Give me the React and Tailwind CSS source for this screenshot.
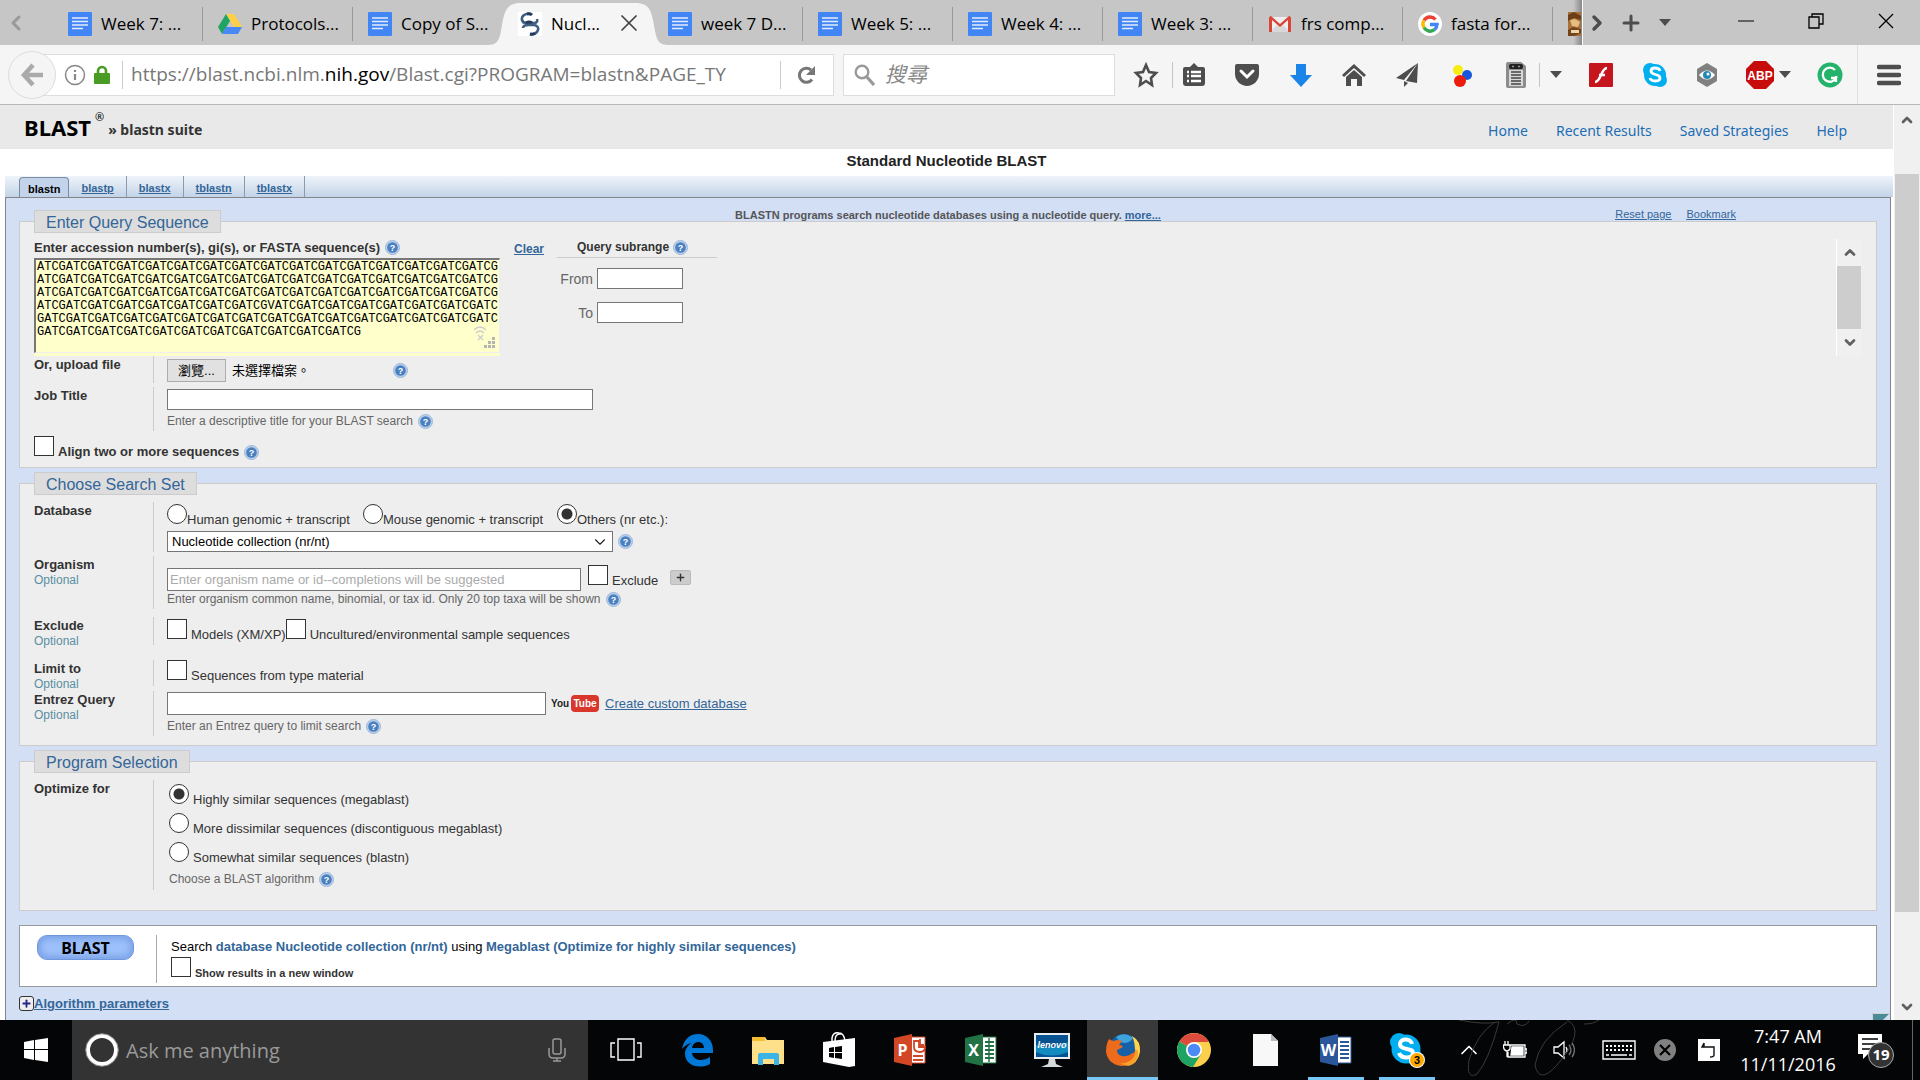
import { useRef, useState } from "react";
import { ChevronDown, ChevronLeft, ChevronRight, ChevronUp, Plus, X } from "lucide-react";

const browserTabs = [
  { title: "Week 7: ...", icon: "doc" },
  { title: "Protocols...", icon: "drive" },
  { title: "Copy of S...", icon: "doc" },
  { title: "Nucl...", icon: "blast", active: true },
  { title: "week 7 D...", icon: "doc" },
  { title: "Week 5: ...", icon: "doc" },
  { title: "Week 4: ...", icon: "doc" },
  { title: "Week 3: ...", icon: "doc" },
  { title: "frs comp...", icon: "gmail" },
  { title: "fasta for...", icon: "google" },
];

const programs = ["blastn", "blastp", "blastx", "tblastn", "tblastx"];

const sequence = [
  "ATCG".repeat(16),
  "ATCG".repeat(16),
  "ATCG".repeat(16),
  "ATCG".repeat(8) + "V" + "ATCG".repeat(7) + "ATC",
  "G" + "ATCG".repeat(15) + "ATC",
  "G" + "ATCG".repeat(11),
].join("\n");

function TabIcon({ name }) {
  if (name === "drive") {
    return (
      <svg className="size-6 shrink-0" viewBox="0 0 24 24">
        <path d="M8 2h8l8 13h-8z" fill="#ffcf48" />
        <path d="M8 2l4 7-8 13-4-7z" fill="#1fa463" />
        <path d="M8 15h16l-4 7H4z" fill="#4688f4" />
      </svg>
    );
  }
  if (name === "blast") {
    return (
      <svg className="size-6 shrink-0 bg-white" viewBox="0 0 24 24" fill="none" strokeWidth="2.6">
        <path d="M13 2C7 1 3 4 4 8q1 3 4 3h8q4 0 3-4" stroke="#3f5f82" />
        <path d="M9 2q3-1 5 1" stroke="#22395a" strokeWidth="3" />
        <path d="M8 11q3-2 6 0" stroke="#22395a" strokeWidth="3" />
        <path d="M5 16q0-3 5-3h6q5 1 4 5-2 5-8 4" stroke="#3f5f82" />
        <path d="M12 22q3 1 5-1" stroke="#22395a" strokeWidth="3" />
      </svg>
    );
  }
  if (name === "gmail") {
    return (
      <svg className="size-6 shrink-0" viewBox="0 0 24 24">
        <path d="M2 5h20v15H2z" fill="#eee" />
        <path d="M2 20l8-8 2 2 2-2 8 8z" fill="#d8d8d8" />
        <path d="M1 6c0-1 1-2 2-2l9 8 9-8c1 0 2 1 2 2v13c0 1-1 1-1 1h-2V8l-8 7-8-7v12H2s-1 0-1-1z" fill="#db4437" />
      </svg>
    );
  }
  if (name === "google") {
    return (
      <svg className="size-6 shrink-0" viewBox="0 0 24 24" fill="none" strokeWidth="3.4">
        <circle cx="12" cy="12" r="12" fill="#fff" />
        <path d="M17.5 7.5A7.2 7.2 0 0 0 6 8.3" stroke="#ea4335" />
        <path d="M6 8.3a7.2 7.2 0 0 0 0 7.4" stroke="#fbbc05" />
        <path d="M6 15.7a7.2 7.2 0 0 0 10.5 2" stroke="#34a853" />
        <path d="M16.5 17.7A7.2 7.2 0 0 0 19 12.5h-7" stroke="#4285f4" />
      </svg>
    );
  }
  return (
    <svg className="size-6 shrink-0" viewBox="0 0 24 24">
      <rect width="24" height="24" rx="1" fill="#4285f4" />
      <path d="M4 6h16M4 9.5h16M4 13h16M4 16.5h11" stroke="#e3edfd" strokeWidth="1.6" />
    </svg>
  );
}

function BrowserTab({ tab }) {
  if (tab.active) {
    return (
      <div className="relative flex h-full w-[150px] shrink-0 items-center">
        <svg className="absolute -left-4 bottom-0 h-[42px] w-[182px]" viewBox="0 0 182 42">
          <path d="M0 42C10 42 12 38 14 28 17 10 18 0 34 0H148c16 0 17 10 20 28 2 10 4 14 14 14z" fill="#f5f5f5" />
        </svg>
        <button className="relative flex w-[112px] items-center gap-[9px] pt-[2px] pl-[15px] text-left">
          <TabIcon name={tab.icon} />
          <span>{tab.title}</span>
        </button>
        <button aria-label="Close tab" className="relative">
          <X className="size-7" strokeWidth={1.5} color="#444" />
        </button>
      </div>
    );
  }
  return (
    <button className="relative flex h-full w-[150px] shrink-0 items-center gap-[9px] pt-[2px] pl-[15px] text-left">
      <TabIcon name={tab.icon} />
      <span className="whitespace-nowrap">{tab.title}</span>
      {tab.title !== "Copy of S..." && <span className="absolute top-[7px] right-0 h-[34px] w-px bg-[#999]" />}
    </button>
  );
}

function TabBar() {
  return (
    <div className="flex h-[45px] shrink-0 items-center bg-[#c6c6c6] text-[17px] text-black">
      <button aria-label="Scroll tabs left" className="flex w-[53px] pl-1">
        <ChevronLeft className="size-6" strokeWidth={3} color="#999" />
      </button>
      {browserTabs.map((t, i) => <BrowserTab key={i} tab={t} />)}
      <div className="flex h-full w-[30px] shrink-0 items-center border-r border-white bg-linear-to-r from-[#c6c6c6] from-70% to-[#888] pt-[2px] pl-[15px]">
        <svg className="h-6 w-[13px]" viewBox="0 0 13 24">
          <rect width="13" height="24" fill="#a8703a" />
          <path d="M0 3l6-3 7 4v4L6 6 0 9z" fill="#6e3f17" />
          <path d="M2 8l5-1 5 3-2 5-6-1z" fill="#e5bd80" />
          <path d="M0 18l5-3 8 2v4l-7 3H0z" fill="#74431c" />
          <path d="M3 18h8v3H3z" fill="#efd6a8" />
        </svg>
      </div>
      <button aria-label="Scroll tabs right" className="ml-[2px]"><ChevronRight className="size-6" strokeWidth={3.5} color="#4d4d4d" /></button>
      <button aria-label="New tab" className="ml-[10px]"><Plus className="size-6" strokeWidth={3} color="#4d4d4d" /></button>
      <button aria-label="List tabs" className="ml-4">
        <svg className="h-[7px] w-3" viewBox="0 0 12 7"><path d="M0 0h12L6 7z" fill="#4d4d4d" /></svg>
      </button>
      <div className="ml-auto flex items-center gap-[54px] pr-[26px] pb-1">
        <button aria-label="Minimize">
          <svg className="size-4" viewBox="0 0 16 16"><path d="M0 8h16" stroke="#000" /></svg>
        </button>
        <button aria-label="Restore">
          <svg className="size-4" viewBox="0 0 16 16" fill="none" stroke="#000" strokeWidth="1.3">
            <path d="M1 4h10v11H1zM4 4V1h11v10h-4" />
          </svg>
        </button>
        <button aria-label="Close window">
          <svg className="size-4" viewBox="0 0 16 16"><path d="M1 1l14 14M15 1L1 15" stroke="#000" strokeWidth="1.3" /></svg>
        </button>
      </div>
    </div>
  );
}

function Tool({ label, width, children }) {
  return (
    <button aria-label={label} className={"flex shrink-0 items-center justify-center " + (width || "w-[53px]")}>
      <svg className="size-[26px]" viewBox="0 0 26 26">{children}</svg>
    </button>
  );
}

function Caret() {
  return <svg className="h-[7px] w-3 shrink-0" viewBox="0 0 12 7"><path d="M0 0h12L6 7z" fill="#4d4d4d" /></svg>;
}

function NavBar() {
  return (
    <div className="flex h-[60px] shrink-0 items-center border-b border-[#b8b8b8] bg-[#f5f5f5] pl-2">
      <button aria-label="Back" className="relative z-10 -mr-[14px] flex size-12 shrink-0 items-center justify-center rounded-full border border-[#ddd] bg-[#f5f5f5]">
        <svg className="size-6" viewBox="0 0 24 24" fill="none" stroke="#aaa" strokeWidth="4.5">
          <path d="M13 2L4 12l9 10M4 12h19" />
        </svg>
      </button>
      <div className="flex h-[42px] min-w-0 flex-1 items-center border border-[#ddd] bg-white pl-[21px]">
        <svg className="size-[22px] shrink-0" viewBox="0 0 22 22" fill="none" stroke="#888" strokeWidth="1.5">
          <circle cx="11" cy="11" r="9.5" />
          <path d="M11 10v6M11 6v2" strokeWidth="2.2" />
        </svg>
        <svg className="ml-2 h-[19px] w-4 shrink-0" viewBox="0 0 16 19">
          <path d="M4 9V6a4 4 0 0 1 8 0v3" fill="none" stroke="#4a9b24" strokeWidth="2.6" />
          <rect y="8" width="16" height="11" rx="1" fill="#4a9b24" />
        </svg>
        <div className="ml-3 h-7 w-px shrink-0 bg-[#ccc]" />
        <div className="ml-2 text-[19px] whitespace-nowrap text-[#777]">
          https://blast.ncbi.nlm.<span className="text-black">nih.gov</span>/Blast.cgi?PROGRAM=blastn&amp;PAGE_TY
        </div>
        <div className="ml-auto h-7 w-px shrink-0 bg-[#ccc]" />
        <button aria-label="Reload" className="px-4">
          <svg className="size-5" viewBox="0 0 20 20">
            <path d="M15 14.5A7 7 0 1 1 14 5" fill="none" stroke="#777" strokeWidth="3" />
            <path d="M18 1v9H9z" fill="#777" />
          </svg>
        </button>
      </div>
      <div className="ml-[9px] flex h-[42px] w-[272px] shrink-0 items-center gap-[9px] border border-[#ddd] bg-white pl-[10px]">
        <svg className="size-[22px] shrink-0" viewBox="0 0 22 22" fill="none" stroke="#999">
          <circle cx="8" cy="8" r="6.3" strokeWidth="2.4" />
          <path d="M12.5 12.5L20 21" strokeWidth="3.2" />
        </svg>
        <input aria-label="搜尋" placeholder="搜尋" className="min-w-0 flex-1 text-[21px] italic outline-none placeholder:text-[#888]" />
      </div>
      <div className="ml-1 flex w-[801px] shrink-0 items-center">
        <Tool label="Bookmark page">
          <path d="M13 3l3 7 7 1-5 5 1 7-6-4-6 4 1-7-5-5 7-1z" fill="none" stroke="#4d4d4d" strokeWidth="2.6" />
        </Tool>
        <Tool label="Bookmarks" width="w-[43px] border-l border-[#c4c4c4]">
          <path d="M4 5h5l4-4 4 4h5q2 0 2 2v14q0 3-3 3H5q-3 0-3-3V7q0-2 2-2z" fill="#4d4d4d" />
          <path d="M6 10h2M10 10h10M6 14h2M10 14h10M6 19h2M10 19h10" stroke="#fff" strokeWidth="2.4" />
        </Tool>
        <Tool label="Pocket" width="w-[64px]">
          <path d="M3 2h20q2 0 2 2v8c0 7-6 12-12 12S1 19 1 12V4q0-2 2-2z" fill="#4d4d4d" />
          <path d="M7 9l6 6 6-6" fill="none" stroke="#fff" strokeWidth="3" strokeLinecap="round" />
        </Tool>
        <Tool label="Downloads" width="w-[43px]">
          <path d="M8 2h10v11h6L13 25 2 13h6z" fill="#1a84e8" />
        </Tool>
        <Tool label="Home" width="w-[64px]">
          <path d="M1 13L13 2l12 11-2 2L13 6 3 15z" fill="#4d4d4d" />
          <path d="M5 15l8-7 8 7v9h-5v-7h-6v7H5z" fill="#4d4d4d" />
        </Tool>
        <Tool label="Share" width="w-[41px]">
          <path d="M24 1L2 16l8 2zM24 1L12 19l11 2zM10 19v6l4-4z" fill="#4d4d4d" />
        </Tool>
        <Tool label="Color tool" width="w-[69px]">
          <circle cx="9" cy="8" r="5" fill="#f5ee10" />
          <circle cx="18" cy="13" r="5" fill="#1757e0" />
          <circle cx="11" cy="19" r="6" fill="#ee1c0c" />
        </Tool>
        <Tool label="Session manager" width="w-[39px]">
          <path d="M5 0h13l5 4v20q0 2-2 2H5q-2 0-2-2V2q0-2 2-2z" fill="#8c8c8c" />
          <rect x="6" y="2" width="14" height="5" rx="2" fill="#222" />
          <path d="M9 4.500h2M15 4.500h2" stroke="#999" strokeWidth="1.500" />
          <path d="M6 8h14v16H6z" fill="#d8d8d8" />
          <path d="M8 10h10M8 13h10M8 16h10M8 19h10M8 22h10" stroke="#444" strokeWidth="1.500" />
        </Tool>
        <button aria-label="More sessions" className="ml-1 flex h-6 w-8 items-center justify-center border-l border-[#c4c4c4]"><Caret /></button>
        <Tool label="Flash" width="w-[60px]">
          <rect x="1" y="1" width="24" height="24" rx="1" fill="#c4161c" />
          <path d="M19 6c-6 0-6 14-12 14M11 13h6" fill="none" stroke="#fff" strokeWidth="2.6" />
        </Tool>
        <Tool label="Skype" width="w-[48px]">
          <circle cx="8" cy="8" r="7" fill="#00aff0" />
          <circle cx="18" cy="18" r="7" fill="#00aff0" />
          <circle cx="13" cy="13" r="11" fill="#00aff0" />
          <path d="M18 9c-1-4-9-4-9 0 0 5 9 2 9 7 0 4-9 4-10 0" fill="none" stroke="#fff" strokeWidth="2.8" />
        </Tool>
        <Tool label="Privacy" width="w-[55px]">
          <path d="M13 1l10 6v12l-10 6-10-6V7z" fill="#808080" />
          <path d="M5 13q8-9 16 0-8 9-16 0z" fill="#fff" />
          <circle cx="13" cy="13" r="4" fill="#2288b5" />
          <circle cx="14" cy="12" r="1.5" fill="#fff" />
        </Tool>
        <button aria-label="Adblock Plus" className="flex w-[68px] items-center gap-[5px] pl-3">
          <svg className="size-7" viewBox="0 0 28 28">
            <path d="M8 0h12l8 8v12l-8 8H8l-8-8V8z" fill="#c70d0c" />
            <text x="14" y="19" textAnchor="middle" fontSize="12" fontWeight="bold" fill="#fff" fontFamily="Liberation Sans">ABP</text>
          </svg>
          <Caret />
        </button>
        <Tool label="Grammarly" width="w-[55px]">
          <circle cx="13" cy="13" r="12.5" fill="#25b36b" />
          <path d="M18 8a7 7 0 1 0 1 8h-5M19 14v6" fill="none" stroke="#fff" strokeWidth="2.3" />
        </Tool>
        <button aria-label="Menu" className="flex h-[59px] flex-1 items-center justify-center border-l border-[#e0e0e0]">
          <svg className="h-[22px] w-6" viewBox="0 0 24 22">
            <path d="M2 3h20M2 11h20M2 19h20" stroke="#4d4d4d" strokeWidth="4.5" strokeLinecap="round" />
          </svg>
        </button>
      </div>
    </div>
  );
}

function Help() {
  return (
    <button type="button" aria-label="Help" className="shrink-0">
      <svg className="size-[15px]" viewBox="0 0 15 15">
        <circle cx="7.5" cy="7.5" r="7" fill="#b9d0ec" stroke="#9db8d8" />
        <circle cx="7.5" cy="7.5" r="5.3" fill="#4a80c0" />
        <text x="7.5" y="11" textAnchor="middle" fontSize="9" fontWeight="bold" fill="#fff" fontFamily="Liberation Sans">?</text>
      </svg>
    </button>
  );
}

function Fieldset({ title, className, children }) {
  return (
    <fieldset className={"min-w-0 border border-[#ccc] bg-[#eee] " + className}>
      <legend className="ml-[14px] h-[23px] border border-[#ccc] bg-[#ddd] px-[11px] text-base leading-6 text-[#369]">{title}</legend>
      <div className="px-[14px]">{children}</div>
    </fieldset>
  );
}

function Row({ label, htmlFor, optional, className, children }) {
  return (
    <div className={"flex " + className}>
      <div className="w-[119px] shrink-0 pt-px leading-4">
        <label htmlFor={htmlFor} className="block font-bold">{label}</label>
        {optional && <span className="block text-xs leading-[15px] text-[#5a8fa3]">Optional</span>}
      </div>
      <div className="border-l border-[#ccc] pl-[13px]">{children}</div>
    </div>
  );
}

function Check({ label, className, textClass }) {
  return (
    <label className={"flex items-end gap-1 leading-4 " + (className || "")}>
      <input type="checkbox" className="mb-1 size-5 shrink-0 appearance-none border border-[#333] bg-white checked:bg-[#333]" />
      <span className={textClass}>{label}</span>
    </label>
  );
}

function Radio({ name, label, defaultChecked, className }) {
  return (
    <label className={"flex items-end leading-4 " + className}>
      <input
        type="radio"
        name={name}
        defaultChecked={defaultChecked}
        className="mb-1 size-5 shrink-0 appearance-none rounded-full border border-[#333] bg-white checked:bg-[radial-gradient(circle,#333_5px,#fff_6px)]"
      />
      <span>{label}</span>
    </label>
  );
}

function QuerySection() {
  const fileRef = useRef(null);
  return (
    <Fieldset title="Enter Query Sequence" className="relative -mt-[11px] h-[258px]">
      <div className="flex h-[123px] items-start">
        <div className="w-[466px] shrink-0">
          <div className="flex h-[25px] items-center gap-[5px] pt-1">
            <label htmlFor="query" className="font-bold">Enter accession number(s), gi(s), or FASTA sequence(s)</label>
            <Help />
          </div>
          <div className="relative bg-[#ffc] pb-[3px]">
            <textarea
              id="query"
              spellCheck={false}
              defaultValue={sequence}
              className="block h-[95px] w-full resize-none overflow-hidden border-t-2 border-r border-b border-l-2 border-t-[#777] border-r-[#eee] border-b-[#eee] border-l-[#777] bg-[#ffc] pt-px pl-px font-['Liberation_Mono',monospace] text-[12px] leading-[13px] whitespace-pre text-black outline-none"
            />
            <svg className="absolute right-1 bottom-[7px] h-6 w-[22px]" viewBox="0 0 22 24">
              <path d="M0 5q6-6 12 0M2 8q4-4 8 0M4 10l5 5M9 10l-5 5" fill="none" stroke="#ccc" strokeWidth="1.3" />
              <path d="M18 12h3v3h-3zM14 16h3v3h-3zM18 16h3v3h-3zM10 20h3v3h-3zM14 20h3v3h-3zM18 20h3v3h-3z" fill="#b5b5b5" />
            </svg>
          </div>
        </div>
        <a href="#clear" className="ml-[14px] pt-2 text-xs leading-4 font-bold text-[#369] underline">Clear</a>
        <div className="ml-[13px] w-[160px] text-sm text-[#666]">
          <div className="flex h-[25px] items-center gap-1 border-b border-[#ccc] pt-1 pl-5 text-xs font-bold text-[#333]">Query subrange <Help /></div>
          <label className="mt-[10px] flex h-[21px] items-center"><span className="w-10 pr-1 text-right">From</span><input className="h-[21px] w-[86px] border border-[#767676] bg-white px-1" /></label>
          <label className="mt-[13px] flex h-[21px] items-center"><span className="w-10 pr-1 text-right">To</span><input className="h-[21px] w-[86px] border border-[#767676] bg-white px-1" /></label>
        </div>
        <div className="mt-[6px] ml-auto flex h-[117px] w-[26px] flex-col items-center border-l border-white bg-[#f0f0f0]">
          <ChevronUp className="h-[27px] w-4 shrink-0" strokeWidth={4} color="#606060" />
          <div className="w-6 flex-1 self-start bg-[#cdcdcd]" />
          <ChevronDown className="h-[27px] w-4 shrink-0" strokeWidth={4} color="#606060" />
        </div>
      </div>
      <Row label="Or, upload file" className="h-[27px]">
        <div className="flex items-center pt-[3px]">
          <button type="button" onClick={() => fileRef.current.click()} className="h-[23px] w-[59px] border border-[#adadad] bg-[#e1e1e1] text-[13px] text-black">瀏覽...</button>
          <input ref={fileRef} type="file" aria-label="Or, upload file" className="hidden" />
          <span className="ml-[6px] w-[161px] text-[13px] text-black">未選擇檔案。</span>
          <Help />
        </div>
      </Row>
      <Row label="Job Title" htmlFor="job" className="mt-1 h-11">
        <input id="job" className="mt-[2px] block h-[21px] w-[426px] border border-[#767676] bg-white px-1" />
        <div className="mt-[3px] flex items-center gap-[5px] text-xs text-[#666]">Enter a descriptive title for your BLAST search <Help /></div>
      </Row>
      <div className="mt-[5px] flex items-end gap-[5px]">
        <Check label="Align two or more sequences" textClass="font-bold" />
        <Help />
      </div>
    </Fieldset>
  );
}

function SearchSetSection() {
  return (
    <Fieldset title="Choose Search Set" className="mt-1 h-[274px]">
      <Row label="Database" htmlFor="db" className="mt-[7px] h-[50px]">
        <div className="flex pt-[2px]">
          <Radio name="db-type" label="Human genomic + transcript" className="w-[196px]" />
          <Radio name="db-type" label="Mouse genomic + transcript" className="w-[194px]" />
          <Radio name="db-type" label="Others (nr etc.):" defaultChecked className="" />
        </div>
        <div className="mt-[3px] flex items-center gap-[5px]">
          <div className="relative">
            <select id="db" className="h-[21px] w-[446px] appearance-none border border-[#767676] bg-white pl-1 text-[13px] text-black">
              <option>Nucleotide collection (nr/nt)</option>
            </select>
            <ChevronDown className="pointer-events-none absolute top-[2px] right-1 size-[18px]" strokeWidth={1.5} color="#222" />
          </div>
          <Help />
        </div>
      </Row>
      <Row label="Organism" htmlFor="organism" optional className="mt-1 h-[53px]">
        <div className="flex items-start pt-[9px]">
          <input id="organism" placeholder="Enter organism name or id--completions will be suggested" className="mt-[3px] h-[23px] w-[414px] border border-[#767676] bg-white px-[2px] placeholder:text-[#aaa]" />
          <Check label="Exclude" className="ml-[7px]" />
          <button type="button" aria-label="Add organism" className="mt-[5px] ml-3 flex h-[15px] w-[21px] items-center justify-center rounded-xs border border-[#bbb] bg-[#ccc]">
            <Plus className="size-[11px]" strokeWidth={3} color="#333" />
          </button>
        </div>
        <div className="flex items-center gap-[5px] text-xs text-[#666]">Enter organism common name, binomial, or tax id. Only 20 top taxa will be shown <Help /></div>
      </Row>
      <Row label="Exclude" optional className="mt-2 h-7">
        <div className="flex pt-[2px]">
          <Check label="Models (XM/XP)" />
          <Check label="Uncultured/environmental sample sequences" />
        </div>
      </Row>
      <Row label="Limit to" optional className="mt-[15px] h-[26px]">
        <Check label="Sequences from type material" />
      </Row>
      <Row label="Entrez Query" htmlFor="entrez" optional className="mt-[5px] h-[45px]">
        <div className="flex items-center pt-px">
          <input id="entrez" className="h-[23px] w-[379px] border border-[#767676] bg-white px-1" />
          <svg className="ml-[5px] h-[17px] w-12" viewBox="0 0 48 17">
            <rect x="20" y="0" width="28" height="17" rx="4" fill="#d9372b" />
            <text x="0" y="12" fontSize="10" fontWeight="bold" fill="#222" fontFamily="Liberation Sans">You</text>
            <text x="34" y="12" textAnchor="middle" fontSize="10" fontWeight="bold" fill="#fff" fontFamily="Liberation Sans">Tube</text>
          </svg>
          <a href="#custom" className="ml-[6px] text-[#369] underline">Create custom database</a>
        </div>
        <div className="mt-[3px] flex items-center gap-[5px] text-xs text-[#666]">Enter an Entrez query to limit search <Help /></div>
      </Row>
    </Fieldset>
  );
}

function ProgramSection() {
  return (
    <Fieldset title="Program Selection" className="mt-1 h-[161px]">
      <Row label="Optimize for" className="mt-[7px] h-[110px]">
        <div className="flex flex-col gap-[5px] pt-1 pl-[2px]">
          <Radio name="opt" label="Highly similar sequences (megablast)" defaultChecked className="gap-1" />
          <Radio name="opt" label="More dissimilar sequences (discontiguous megablast)" className="gap-1" />
          <Radio name="opt" label="Somewhat similar sequences (blastn)" className="gap-1" />
          <div className="flex items-center gap-[5px] text-xs text-[#666]">Choose a BLAST algorithm <Help /></div>
        </div>
      </Row>
    </Fieldset>
  );
}

function BlastPage() {
  const [program, setProgram] = useState("blastn");
  return (
    <div className="min-w-0 flex-1 bg-white font-['Liberation_Sans','Noto_Sans_CJK_TC',sans-serif] text-[13px] text-[#333]">
      <header className="flex h-11 items-center bg-[#e9e9e9] pr-[46px] pl-6 font-['Noto_Sans',sans-serif]">
        <span className="text-[22px] font-bold text-black">BLAST</span>
        <span className="mb-5 ml-1 text-[11px] text-black">®</span>
        <span className="mt-[6px] ml-1 text-sm font-bold">» blastn suite</span>
        <nav className="mt-[7px] ml-auto flex gap-7 text-sm text-[#1c6db5]">
          <a href="#home">Home</a>
          <a href="#recent">Recent Results</a>
          <a href="#saved">Saved Strategies</a>
          <a href="#help">Help</a>
        </nav>
      </header>
      <h1 className="h-[27px] text-center text-[15px] leading-6 font-bold text-[#222]">Standard Nucleotide BLAST</h1>

      {/* program tabs */}
      <div className="ml-[5px] flex h-[21px] bg-linear-to-b from-[#eff4fa] to-[#c3d4e7] pl-[14px] text-[11px] leading-[22px] font-bold text-[#369]">
        {programs.map((p) => (
          <button
            key={p}
            onClick={() => setProgram(p)}
            className={p === program ? "mt-px rounded-t border border-b-0 border-[#7a8ba3] bg-[#c3d4ea] px-2 text-black" : "border-r border-[#8a9bb0] px-3 pt-px underline"}
          >
            {p}
          </button>
        ))}
      </div>

      <main className="relative mr-[2px] ml-[5px] border border-b-0 border-[#84868c] bg-[#d3dff5] px-[13px] pb-4">
        <div className="grid h-[23px] grid-cols-[1fr_auto_1fr] items-center pt-2 text-[11px] text-[#555]">
          <span />
          <p className="font-bold">BLASTN programs search nucleotide databases using a nucleotide query. <a href="#more" className="text-[#369] underline">more...</a></p>
          <div className="flex justify-end gap-[15px] pr-[141px] pb-px text-[#369] underline">
            <a href="#reset">Reset page</a>
            <a href="#bookmark">Bookmark</a>
          </div>
        </div>
        <QuerySection />
        <SearchSetSection />
        <ProgramSection />

        <section className="mt-[14px] flex h-[62px] border border-[#999] bg-white pt-[9px] pl-[17px]">
          <button className="h-[25px] w-[97px] rounded-[10px] border border-[#6f97dc] bg-[#9cc0fa] font-['Noto_Sans',sans-serif] text-base leading-5 font-bold text-black shadow-[inset_0_0_6px_3px_#7ba2e6]">BLAST</button>
          <div className="ml-[22px] h-12 border-l border-[#aaa] pl-[14px] text-black">
            <p className="pt-1 leading-4">Search <b className="text-[#369]">database Nucleotide collection (nr/nt)</b> using <b className="text-[#369]">Megablast (Optimize for highly similar sequences)</b></p>
            <Check label="Show results in a new window" className="mt-[2px]" textClass="text-[11px] font-bold text-[#333]" />
          </div>
        </section>
        <div className="mt-[7px] flex items-center">
          <button aria-label="Expand parameters" className="flex size-[15px] items-center justify-center rounded-[3px] border border-[#333] bg-[#eee]">
            <Plus className="size-[11px]" strokeWidth={4} color="#25258c" />
          </button>
          <a href="#params" className="font-bold text-[#369] underline">Algorithm parameters</a>
        </div>
        <svg className="absolute top-[815px] right-0 h-[18px] w-[18px]" viewBox="0 0 18 18">
          <path d="M0 18V0h18" fill="#fff" stroke="#aaa" />
          <path d="M1 1h16L1 17z" fill="#4b8b98" />
        </svg>
      </main>
    </div>
  );
}

function TaskIcon({ label, active, open, children }) {
  return (
    <button
      aria-label={label}
      className={"flex h-full w-[71px] shrink-0 items-center justify-center " + (active ? "border-b-[3px] border-[#76c7f5] bg-[#393939] pt-[3px]" : "")}
    >
      <span className={open ? "flex h-full w-14 items-center justify-center border-b-[3px] border-[#76c7f5] pt-[3px]" : ""}>
        <svg className="size-9" viewBox="0 0 36 36">{children}</svg>
      </span>
    </button>
  );
}

function OfficeIcon({ letter, color }) {
  return (
    <>
      <path d="M19 5h14v26H19z" fill="#fff" stroke={color} />
      <path d="M22 10h9M22 14h9M22 18h9M22 22h9M22 26h9" stroke={color} strokeWidth="1.8" />
      <path d="M2 6l18-4v32L2 30z" fill={color} />
      <text x="10.5" y="24" textAnchor="middle" fontSize="16" fontWeight="bold" fill="#fff" fontFamily="Open Sans">{letter}</text>
    </>
  );
}

function Taskbar() {
  return (
    <div className="flex h-[60px] shrink-0 items-center bg-[#040506] text-white">
      <button aria-label="Start" className="flex w-[72px] justify-center">
        <svg className="size-6" viewBox="0 0 24 24" fill="#fff">
          <path d="M0 4l10-2v9H0zM11 2l13-2v11H11zM0 12h10v10L0 20zM11 12h13v12l-13-2z" />
        </svg>
      </button>
      <div className="mr-[2px] flex h-full w-[516px] items-center bg-[#333] pl-[13px]">
        <svg className="size-[34px]" viewBox="0 0 34 34">
          <circle cx="17" cy="17" r="14" fill="none" stroke="#fff" strokeWidth="4" />
          <circle cx="17" cy="17" r="16.3" fill="none" stroke="#999" />
        </svg>
        <input aria-label="Ask me anything" placeholder="Ask me anything" className="ml-[7px] min-w-0 flex-1 bg-transparent pt-[2px] text-xl outline-none placeholder:text-[#9a9a9a]" />
        <svg className="mr-[22px] h-6 w-[18px]" viewBox="0 0 18 24" fill="none" stroke="#999" strokeWidth="1.5">
          <rect x="5" y="1" width="8" height="15" rx="2" />
          <path d="M1 10v6q0 4 4 4h8q4 0 4-4v-6M9 20v3M5 23h8" />
        </svg>
      </div>
      <TaskIcon label="Task view">
        <path d="M10 7h16v21H10zM7 11H3v14h4M29 11h4v14h-4" fill="none" stroke="#fff" strokeWidth="1.4" />
      </TaskIcon>
      <TaskIcon label="Edge">
        <path d="M3 17C5 6 12 2 19 2c9 0 15 7 15 16v3H13c1 8 11 9 18 4v7c-11 6-25 1-25-10 0-5 3-9 7-11-6 1-8 4-10 6zM13 16h12c0-8-11-8-12 0z" fill="#0078d7" />
      </TaskIcon>
      <TaskIcon label="File Explorer">
        <path d="M2 5h13l2 3h17v24H2z" fill="#ffe08a" />
        <path d="M2 5h13v4H2z" fill="#f5bd31" />
        <path d="M8 32V23q0-2 2-2h17q2 0 2 2v10h-5v-6H13v6H8z" fill="#3bb5e8" />
      </TaskIcon>
      <TaskIcon label="Store">
        <path d="M11 10V6q1-6 7-5 5 0 6 8M14 9q0-8 6-7" fill="none" stroke="#fff" strokeWidth="1.5" />
        <path d="M2 10l32-4v28l-6 1L2 30z" fill="#fff" />
        <path d="M8 16l5-1v5H8zM14 15l7-1v6h-7zM8 21h5v5l-5-1zM14 21h7v6l-7-1z" fill="#050505" />
      </TaskIcon>
      <TaskIcon label="PowerPoint">
        <path d="M19 5h14v26H19z" fill="#fff" stroke="#d24726" />
        <path d="M22 9h5v6h6q0 5-5 5-6 0-6-5zM28 7v6h4M21 24h10M21 28h10" fill="none" stroke="#d24726" strokeWidth="1.8" />
        <path d="M2 6l18-4v32L2 30z" fill="#d24726" />
        <text x="10.5" y="24" textAnchor="middle" fontSize="16" fontWeight="bold" fill="#fff" fontFamily="Open Sans">P</text>
      </TaskIcon>
      <TaskIcon label="Excel">
        <OfficeIcon letter="X" color="#217346" />
        <path d="M26 6v24" stroke="#217346" strokeWidth="1.5" />
      </TaskIcon>
      <TaskIcon label="Lenovo">
        <rect x="0" y="1" width="36" height="26" fill="#e8eef2" />
        <rect x="2" y="3" width="32" height="22" fill="#075291" />
        <path d="M2 13q16 6 32-3v10q-17 7-32 0z" fill="#118bc0" />
        <text x="18" y="16" textAnchor="middle" fontSize="9" fontWeight="bold" fontStyle="italic" fill="#fff" fontFamily="Liberation Sans">lenovo</text>
        <path d="M15 27h6l1 5 7 3H7l7-3z" fill="#d5dadd" />
      </TaskIcon>
      <TaskIcon label="Firefox" active>
        <circle cx="19" cy="17" r="15" fill="#1660a8" />
        <path d="M11 5q8-6 17 1-3 5-9 5-5-1-8-6z" fill="#3fa4dc" />
        <path d="M27 4q9 5 8 16-2 12-13 14 8-6 8-15 0-9-3-15z" fill="#ffd34a" />
        <path d="M4 7q3 2 5 2 4-2 8 0l-3 4q3 0 4 2-4 2-6 3 0 5 5 6 6 1 10-3 2 1 4-4 2 8-3 13-5 4-12 4Q3 32 1 20 1 12 4 7z" fill="#ee6a1c" />
        <path d="M30 17q1 6-3 10-5 5-12 4 9 6 15-1 4-5 3-11z" fill="#f9a127" />
      </TaskIcon>
      <TaskIcon label="Chrome">
        <circle cx="18" cy="18" r="17" fill="#fdd04b" />
        <path d="M18 18L3.5 9.5A17 17 0 0 1 33 10H18z" fill="#dd4b3e" />
        <path d="M18 18L3.3 9.5A17 17 0 0 0 17 35l8-13z" fill="#1da362" />
        <path d="M18 10h15l-8 12z" fill="#fdd04b" />
        <circle cx="18" cy="18" r="8" fill="#fff" />
        <circle cx="18" cy="18" r="6.3" fill="#4c8bf5" />
      </TaskIcon>
      <TaskIcon label="Document">
        <path d="M6 2h18l7 7v25H6z" fill="#f8f8f8" />
        <path d="M24 2v7h7z" fill="#bbb" />
      </TaskIcon>
      <TaskIcon label="Word" open><OfficeIcon letter="W" color="#2b579a" /></TaskIcon>
      <TaskIcon label="Skype" open>
        <circle cx="10" cy="10" r="9" fill="#00aff0" />
        <circle cx="25" cy="25" r="8" fill="#00aff0" />
        <circle cx="17" cy="17" r="14.5" fill="#00aff0" />
        <path d="M23 12c-1-6-12-6-12 0 0 7 13 3 13 9 0 6-12 6-14 0" fill="none" stroke="#fff" strokeWidth="4" />
        <circle cx="28" cy="28" r="8" fill="#fff" />
        <circle cx="28" cy="28" r="7" fill="#ffa800" />
        <text x="28" y="32" textAnchor="middle" fontSize="11" fontWeight="bold" fill="#000" fontFamily="Liberation Sans">3</text>
      </TaskIcon>

      <div className="relative ml-auto flex h-full items-center">
        <svg className="pointer-events-none absolute top-0 left-0 h-[60px] w-[170px]" viewBox="0 0 170 60" fill="none" stroke="#3a3a3a">
          <path d="M10 0Q34 5 50 2 40 40 28 54 17 60 20 40 28 14 46 2M58 4q10-8 10 0 8 4 12-3M118 0q20 10-10 45Q90 65 86 45 90 20 118 2M135 4q10 0 15-4" />
        </svg>
        <button aria-label="Show hidden icons" className="flex w-10 justify-center"><ChevronUp className="size-7" strokeWidth={1.5} /></button>
        <button aria-label="Battery" className="flex w-[52px] justify-center">
          <svg className="h-[18px] w-6" viewBox="0 0 24 18" fill="none" stroke="#fff" strokeWidth="1.3">
            <path d="M7 4h15v12H5v-5M22 8h2v4h-2M0 4h7v4q-3 4-6 0zM2 4V0M5 4V0M4 10v6" />
            <path d="M9 6h11v8H8z" fill="#fff" />
          </svg>
        </button>
        <button aria-label="Volume" className="flex w-[46px] justify-center">
          <svg className="size-[22px]" viewBox="0 0 22 22" fill="none" stroke="#fff" strokeWidth="1.3">
            <path d="M1 8h4l6-5v16l-6-5H1zM13 8q2 3 0 6" />
            <path d="M16 6q4 5 0 10M19 4q5 7 0 14" stroke="#777" />
          </svg>
        </button>
        <button aria-label="Keyboard" className="flex w-[64px] justify-center">
          <svg className="h-5 w-[34px]" viewBox="0 0 34 20" fill="none" stroke="#fff">
            <path d="M1 1h32v18H1z" strokeWidth="1.4" />
            <path d="M4 6h26M4 10h26" strokeWidth="2" strokeDasharray="2 2" />
            <path d="M4 15h3M9 15h16M27 15h3" strokeWidth="1.5" />
          </svg>
        </button>
        <button aria-label="Notifications off" className="flex w-7 justify-center">
          <svg className="size-[22px]" viewBox="0 0 22 22">
            <circle cx="11" cy="11" r="11" fill="#808080" />
            <path d="M6 6l10 10M16 6L6 16" stroke="#000" strokeWidth="2.2" />
          </svg>
        </button>
        <button aria-label="Input method" className="flex w-[60px] justify-center">
          <svg className="size-[22px]" viewBox="0 0 22 22">
            <rect width="22" height="22" fill="#fff" />
            <path d="M6 4L4 8h12v8q0 2-4 2M6 4v4" fill="none" stroke="#111" strokeWidth="1.4" />
          </svg>
        </button>
        <div className="w-[98px] text-center text-lg leading-7">
          <div>7:47 AM</div>
          <div>11/11/2016</div>
        </div>
        <button aria-label="Action center" className="ml-5">
          <svg className="h-9 w-[38px]" viewBox="0 0 38 36">
            <path d="M1 2h24v20H11l-5 5v-5H1z" fill="#fff" />
            <path d="M5 7h16M5 12h16M5 17h10" stroke="#000" strokeWidth="1.6" />
            <circle cx="24" cy="23" r="12.5" fill="#333" stroke="#aaa" />
            <text x="24" y="28" textAnchor="middle" fontSize="15" fontWeight="bold" fill="#fff" fontFamily="Open Sans">19</text>
          </svg>
        </button>
        <div className="ml-[17px] h-full w-2 border-l border-[#666]" />
      </div>
    </div>
  );
}

export default function App() {
  return (
    <div className="flex h-screen flex-col overflow-hidden font-['Open_Sans','Noto_Sans_CJK_TC',sans-serif]">
      <TabBar />
      <NavBar />
      <div className="flex min-h-0 flex-1 overflow-hidden">
        <BlastPage />
        {/* page scrollbar */}
        <div className="flex w-[27px] shrink-0 flex-col items-center border-l border-white bg-[#f0f0f0]">
          <ChevronUp className="h-[30px] w-4 shrink-0" strokeWidth={4} color="#606060" />
          <div className="mt-[39px] w-6 flex-1 bg-[#cdcdcd]" />
          <ChevronDown className="mt-[82px] h-[26px] w-4 shrink-0" strokeWidth={4} color="#606060" />
        </div>
      </div>
      <Taskbar />
    </div>
  );
}
